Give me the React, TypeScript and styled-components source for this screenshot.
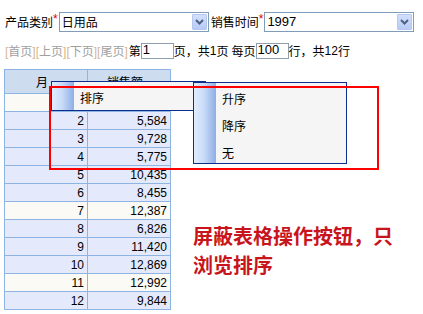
import React from "react";
import styled, { createGlobalStyle } from "styled-components";

const Global = createGlobalStyle`
  html, body { margin: 0; padding: 0; background: #ffffff; }
  body {
    font-family: "Noto Sans CJK SC", "Liberation Sans", sans-serif;
    font-size: 12px;
    color: #000;
  }
`;

const Page = styled.div`
  position: relative;
  width: 423px;
  height: 314px;
  box-sizing: border-box;
  padding: 12px 0 0 4px;
  overflow: hidden;
`;

const FilterRow = styled.div`
  display: flex;
  align-items: center;
  height: 20px;
  padding-left: 1px;
`;

const Label = styled.span<{ $gap?: number }>`
  display: flex;
  align-items: flex-start;
  line-height: 20px;
  margin-left: ${(p) => p.$gap ?? 0}px;
  white-space: nowrap;
`;

const Star = styled.span`
  color: #e00000;
  font-family: "Liberation Sans", sans-serif;
  font-size: 12px;
  line-height: 15px;
  margin-right: 1px;
`;

const SelectBox = styled.div`
  box-sizing: border-box;
  width: 150px;
  height: 20px;
  border: 1px solid #7f9db9;
  display: flex;
  align-items: center;
  background: #fff;
`;

const SelectText = styled.span<{ $latin?: boolean }>`
  flex: 1;
  padding-left: 2px;
  font-family: ${(p) =>
    p.$latin ? `"Liberation Sans", sans-serif` : `"Noto Sans CJK SC", sans-serif`};
  font-size: ${(p) => (p.$latin ? 13 : 12)}px;
  line-height: 18px;
`;

const ArrowBtn = styled.span`
  box-sizing: border-box;
  width: 15px;
  height: 16px;
  margin-right: 1px;
  border: 1px solid #b4c7ee;
  border-radius: 1px;
  background: linear-gradient(to bottom, #d2e0fc, #b7cbf6);
  display: flex;
  align-items: center;
  justify-content: center;
`;

const PagerRow = styled.div`
  display: flex;
  align-items: center;
  height: 16px;
  margin-top: 11px;
  padding-left: 1px;
  white-space: nowrap;
  line-height: 16px;
`;

const PagerLinks = styled.span`
  color: #a0a0a0;
  margin-right: 1px;
`;

const Bracket = styled.span`
  font-family: "Liberation Sans", sans-serif;
  color: #d9b58c;
`;

const Num = styled.span`
  font-family: "Liberation Sans", sans-serif;
`;

const Space = styled.span`
  display: inline-block;
  width: 3px;
`;

const PageInput = styled.span`
  box-sizing: border-box;
  width: 33px;
  height: 16px;
  border: 1px solid #8f9fb0;
  font-family: "Liberation Sans", sans-serif;
  font-size: 13px;
  line-height: 16px;
  padding-left: 1px;
  display: inline-flex;
  align-items: flex-end;
`;

const Body = styled.div`
  display: flex;
  align-items: flex-start;
  margin-top: 10px;
`;

const Grid = styled.div`
  display: grid;
  grid-template-columns: 83px 83px;
  border-top: 1px solid #8db4e2;
  border-left: 1px solid #8db4e2;
`;

const HeadCell = styled.div`
  box-sizing: border-box;
  height: 24px;
  border-right: 1px solid #8db4e2;
  border-bottom: 1px solid #8db4e2;
  background: #cddcef;
  text-align: center;
  line-height: 23px;
  padding-right: 8px;
`;

const Cell = styled.div<{ $alt: boolean }>`
  box-sizing: border-box;
  height: 18px;
  border-right: 1px solid #8db4e2;
  border-bottom: 1px solid #8db4e2;
  background: ${(p) => (p.$alt ? "#fbfaf4" : "#e4eafc")};
  text-align: right;
  padding-right: 3px;
  font-family: "Liberation Sans", sans-serif;
  font-size: 12px;
  line-height: 18px;
`;

const Note = styled.div`
  margin: 152px 0 0 22px;
  color: #c8141c;
  font-family: "Noto Sans CJK SC", sans-serif;
  font-weight: bold;
  font-size: 20px;
  line-height: 29px;
  width: 205px;
`;

const Menu = styled.div<{ $left: number; $top: number; $w: number; $h: number; $z: number }>`
  position: absolute;
  left: ${(p) => p.$left}px;
  top: ${(p) => p.$top}px;
  width: ${(p) => p.$w}px;
  height: ${(p) => p.$h}px;
  z-index: ${(p) => p.$z};
  box-sizing: border-box;
  border: 1px solid #0c2e8e;
  background: #f5f5f5;
  display: flex;
  overflow: hidden;
`;

const Stripe = styled.div`
  width: 22px;
  flex: none;
  background: linear-gradient(to right, #e2edfd, #c9dbf7 45%, #8eaee6);
`;

const Items = styled.div`
  padding-top: 2px;
  display: flex;
  flex-direction: column;
`;

const Item = styled.div`
  height: 27px;
  line-height: 27px;
  padding-left: 6px;
  font-size: 12px;
`;

const RedFrame = styled.div`
  position: absolute;
  left: 49px;
  top: 86px;
  width: 330px;
  height: 84px;
  box-sizing: border-box;
  border: 2px solid #ff0000;
  z-index: 5;
  pointer-events: none;
`;

const rows: [string, string][] = [
  ["1", "6,218"],
  ["2", "5,584"],
  ["3", "9,728"],
  ["4", "5,775"],
  ["5", "10,435"],
  ["6", "8,455"],
  ["7", "12,387"],
  ["8", "6,826"],
  ["9", "11,420"],
  ["10", "12,869"],
  ["11", "12,992"],
  ["12", "9,844"],
];
const creamRows = new Set([1, 7, 11]);

const Chevron = () => (
  <svg width="9" height="6" viewBox="0 0 9 6">
    <path d="M1 1 L4.5 4.5 L8 1" fill="none" stroke="#4d6185" strokeWidth="2" />
  </svg>
);

export default function App() {
  return (
    <>
      <Global />
      <Page>
        <FilterRow>
          <Label>
            产品类别<Star>*</Star>
          </Label>
          <SelectBox>
            <SelectText>日用品</SelectText>
            <ArrowBtn>
              <Chevron />
            </ArrowBtn>
          </SelectBox>
          <Label $gap={2}>
            销售时间<Star>*</Star>
          </Label>
          <SelectBox>
            <SelectText $latin>1997</SelectText>
            <ArrowBtn>
              <Chevron />
            </ArrowBtn>
          </SelectBox>
        </FilterRow>
        <PagerRow>
          <PagerLinks>
            <Bracket>[</Bracket>首页<Bracket>]</Bracket>
            <Bracket>[</Bracket>上页<Bracket>]</Bracket>
            <Bracket>[</Bracket>下页<Bracket>]</Bracket>
            <Bracket>[</Bracket>尾页<Bracket>]</Bracket>
          </PagerLinks>
          第<PageInput>1</PageInput>页，共<Num>1</Num>页<Space />每页
          <PageInput>100</PageInput>行，共<Num>12</Num>行
        </PagerRow>
        <Body>
          <Grid>
            <HeadCell>月</HeadCell>
            <HeadCell>销售额</HeadCell>
            {rows.map(([m, v], i) => (
              <React.Fragment key={m}>
                <Cell $alt={creamRows.has(i + 1)}>{m}</Cell>
                <Cell $alt={creamRows.has(i + 1)}>{v}</Cell>
              </React.Fragment>
            ))}
          </Grid>
          <Note>屏蔽表格操作按钮，只浏览排序</Note>
        </Body>
        <Menu $left={51} $top={81} $w={155} $h={30} $z={2}>
          <Stripe />
          <Items>
            <Item>排序</Item>
          </Items>
        </Menu>
        <Menu $left={193} $top={82} $w={154} $h={82} $z={3}>
          <Stripe />
          <Items>
            <Item>升序</Item>
            <Item>降序</Item>
            <Item>无</Item>
          </Items>
        </Menu>
        <RedFrame />
      </Page>
    </>
  );
}
